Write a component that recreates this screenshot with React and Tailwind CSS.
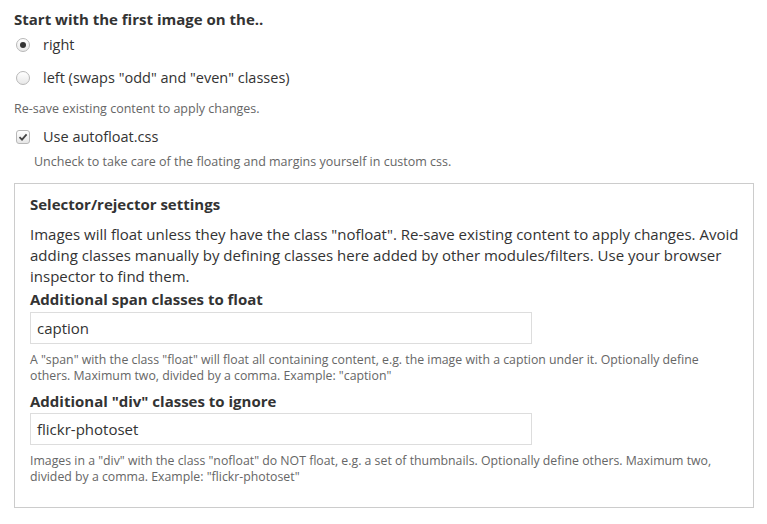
import React from 'react';

const font = { fontFamily: '"Open Sans", "Noto Sans", sans-serif' };

const Radio = ({ checked }) => (
  <span className="inline-flex w-[14px] h-[14px] rounded-full border border-[#b8b8b8] bg-gradient-to-b from-white to-[#e8e8e8] items-center justify-center shrink-0">
    {checked && <span className="w-[6px] h-[6px] rounded-full bg-[#333]"></span>}
  </span>
);

const Check = () => (
  <span className="inline-flex w-[14px] h-[14px] rounded-[3px] border border-[#b8b8b8] bg-gradient-to-b from-white to-[#e6e6e6] items-center justify-center shrink-0">
    <svg width="10" height="10" viewBox="0 0 10 10">
      <path d="M1.5 5.2 L4 7.6 L8.6 2.4" fill="none" stroke="#444" strokeWidth="1.8" />
    </svg>
  </span>
);

export default function App() {
  return (
    <div style={font} className="bg-white text-[#333] w-[767px] h-[524px] pl-[14px] pr-[14px] pt-[8px]">
      <h2 className="text-[15px] font-bold leading-[22px]">Start with the first image on the..</h2>
      <div className="flex flex-col mt-[1px]">
        <label className="flex items-center h-[28px] pl-[2px]">
          <Radio checked />
          <span className="ml-[13px] text-[14.5px]">right</span>
        </label>
        <label className="flex items-center h-[36px] pl-[2px] pt-[2px]">
          <Radio />
          <span className="ml-[13px] text-[14.5px]">left (swaps "odd" and "even" classes)</span>
        </label>
      </div>
      <p className="text-[12.5px] text-[#666] mt-[5px] leading-[18px]">Re-save existing content to apply changes.</p>
      <label className="flex items-center h-[28px] pl-[2px] mt-[5px]">
        <Check />
        <span className="ml-[13px] text-[14.5px]">Use autofloat.css</span>
      </label>
      <p className="text-[12.5px] text-[#666] ml-[20px] leading-[18px] mt-[2px]">Uncheck to take care of the floating and margins yourself in custom css.</p>

      <fieldset className="border border-[#ccc] mt-[12px] w-[740px] h-[325px] pl-[15px] pr-[8px] pt-[9px]">
        <h3 className="text-[15px] font-bold leading-[22px]">Selector/rejector settings</h3>
        <p className="text-[15px] leading-[21px] mt-[9px]">
          Images will float unless they have the class "nofloat". Re-save existing content to apply changes. Avoid adding classes manually by defining classes here added by other modules/filters. Use your browser inspector to find them.
        </p>
        <div className="mt-[1px]">
          <label className="block text-[15px] font-bold leading-[22px]">Additional span classes to float</label>
          <div className="w-[502px] h-[32px] border border-[#ddd] mt-[2px] px-[6px] flex items-center text-[15px]">caption</div>
          <p className="text-[12.3px] text-[#666] leading-[16px] mt-[8px] pr-[20px]">
            A "span" with the class "float" will float all containing content, e.g. the image with a caption under it. Optionally define others. Maximum two, divided by a comma. Example: "caption"
          </p>
        </div>
        <div className="mt-[6px]">
          <label className="block text-[15px] font-bold leading-[22px]">Additional "div" classes to ignore</label>
          <div className="w-[502px] h-[32px] border border-[#ddd] mt-[1px] px-[6px] flex items-center text-[15px]">flickr-photoset</div>
          <p className="text-[12.3px] text-[#666] leading-[16px] mt-[8px] pr-[20px]">
            Images in a "div" with the class "nofloat" do NOT float, e.g. a set of thumbnails. Optionally define others. Maximum two, divided by a comma. Example: "flickr-photoset"
          </p>
        </div>
      </fieldset>
    </div>
  );
}
